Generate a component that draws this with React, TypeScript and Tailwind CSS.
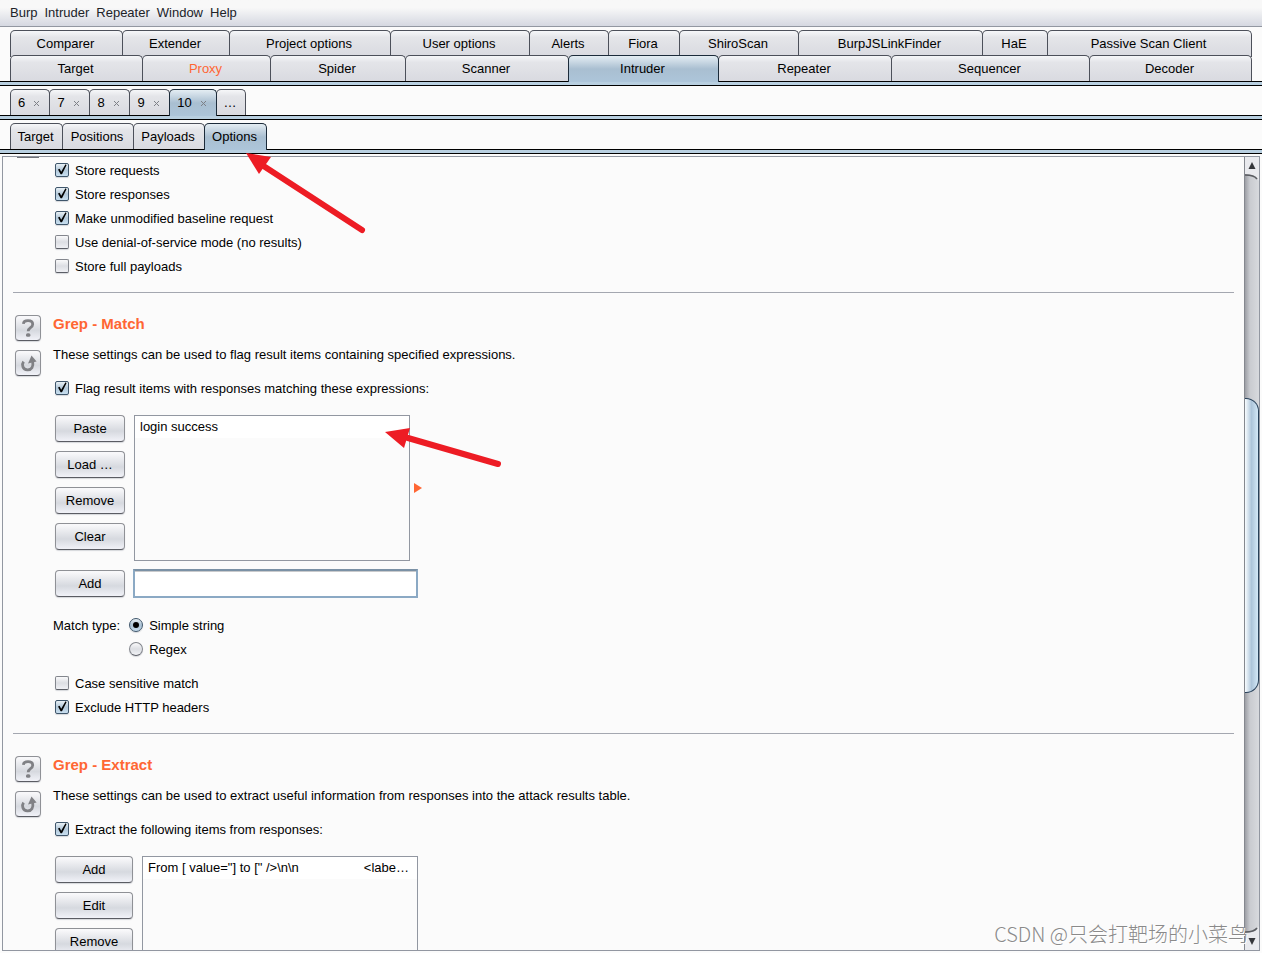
import React, { useId } from "react";

const fontStack = "font-['Liberation_Sans','Noto_Sans_CJK_SC',sans-serif]";

type TabItem = { label: string; size: string; active?: boolean; alert?: boolean };

const upperTabs: TabItem[] = [
  { label: "Comparer", size: "flex-[1_1_113px]" },
  { label: "Extender", size: "flex-[1_1_108px]" },
  { label: "Project options", size: "flex-[1_1_162px]" },
  { label: "User options", size: "flex-[1_1_140px]" },
  { label: "Alerts", size: "flex-[1_1_80px]" },
  { label: "Fiora", size: "flex-[1_1_72px]" },
  { label: "ShiroScan", size: "flex-[1_1_120px]" },
  { label: "BurpJSLinkFinder", size: "flex-[1_1_185px]" },
  { label: "HaE", size: "flex-[1_1_66px]" },
  { label: "Passive Scan Client", size: "flex-[1_1_205px]" },
];

const lowerTabs: TabItem[] = [
  { label: "Target", size: "flex-[1_1_133px]" },
  { label: "Proxy", size: "flex-[1_1_129px]", alert: true },
  { label: "Spider", size: "flex-[1_1_136px]" },
  { label: "Scanner", size: "flex-[1_1_164px]" },
  { label: "Intruder", size: "flex-[1_1_151px]", active: true },
  { label: "Repeater", size: "flex-[1_1_174px]" },
  { label: "Sequencer", size: "flex-[1_1_199px]" },
  { label: "Decoder", size: "flex-[1_1_163px]" },
];

const attackTabs: TabItem[] = [
  { label: "6", size: "w-10" },
  { label: "7", size: "w-[41px]" },
  { label: "8", size: "w-[41px]" },
  { label: "9", size: "w-[41px]" },
  { label: "10", size: "w-12", active: true },
];

const sectionTabs: TabItem[] = [
  { label: "Target", size: "w-[53px]" },
  { label: "Positions", size: "w-[72px]" },
  { label: "Payloads", size: "w-[72px]" },
  { label: "Options", size: "w-[63px]", active: true },
];

function Tab({ tab, children }: { tab: TabItem; children?: React.ReactNode }) {
  const look = tab.active
    ? "z-10 -mb-px border-[#1c2b3a] bg-linear-to-b from-[#e4edf3] via-[#a9bfd1] to-[#adc5da] pb-px"
    : "border-[#4c505a] bg-linear-to-b from-[#f6f7f9] from-0% via-[#e4e5e9] via-25% to-[#d9dae0]";
  return (
    <button
      type="button"
      role="tab"
      aria-selected={!!tab.active}
      className={`relative -ml-px flex min-w-0 items-center justify-center whitespace-nowrap rounded-t-[5px] border border-b-0 pr-[2px] first:ml-0 ${look} ${tab.size} ${tab.alert ? "text-[#ff6633]" : ""}`}
    >
      {children ?? tab.label}
    </button>
  );
}

function Band() {
  return <div className="h-[5px] shrink-0 border-y border-black bg-[#b8cfe0]" />;
}

function CloseMark() {
  return (
    <svg viewBox="0 0 7 7" className="mt-[2px] ml-2 size-[7px]" stroke="#7d8087" strokeWidth="1" aria-hidden="true">
      <path d="M1 1 6 6M6 1 1 6" />
    </svg>
  );
}

function CheckRow({ label, checked }: { label: string; checked?: boolean }) {
  const id = useId();
  return (
    <div className="flex h-6 items-center gap-[6px]">
      <span className="grid size-[14px] place-items-center">
        <input
          id={id}
          type="checkbox"
          defaultChecked={checked}
          className="peer col-start-1 row-start-1 size-[14px] appearance-none rounded-[2px] border border-[#83868d] border-b-[#5b5e66] bg-linear-to-b from-[#fafafb] via-[#dcdee3] to-[#eff0f4] shadow-[0_1px_1px_#d5d7db] checked:border-[#3f566b] checked:from-[#e9f1f6] checked:via-[#b3c8d9] checked:to-[#c8dff0]"
        />
        <svg
          viewBox="0 0 14 14"
          className="pointer-events-none invisible col-start-1 row-start-1 size-[14px] peer-checked:visible"
          aria-hidden="true"
        >
          <path d="M3 6.600 4.600 5.800 6.200 8.800 10.500 1.300 11.600 1.900 7 11.200 5.600 11.200Z" fill="#000" />
        </svg>
      </span>
      <label htmlFor={id} className="pt-[2px]">
        {label}
      </label>
    </div>
  );
}

function RadioRow({ label, checked }: { label: string; checked?: boolean }) {
  const id = useId();
  return (
    <div className="flex h-6 items-center gap-[6px]">
      <span className="grid size-[14px] place-items-center">
        <input
          id={id}
          type="radio"
          name="match-type"
          defaultChecked={checked}
          className="peer col-start-1 row-start-1 size-[14px] appearance-none rounded-full border border-[#83868d] border-b-[#5b5e66] bg-linear-to-b from-[#fafafb] via-[#dcdee3] to-[#f2f3f6] shadow-[0_1px_1px_#d5d7db] checked:border-[#3f566b] checked:from-[#e9f1f6] checked:via-[#a9c0d3] checked:to-[#c8dff0]"
        />
        <span className="pointer-events-none invisible col-start-1 row-start-1 size-[6px] rounded-full bg-black peer-checked:visible" />
      </span>
      <label htmlFor={id} className="pt-[2px]">
        {label}
      </label>
    </div>
  );
}

const buttonFace =
  "border border-[#8f9196] border-b-[#5a5c63] bg-linear-to-b from-[#f8f8fa] from-5% via-[#d6d9df] via-60% to-[#f1f2f8] shadow-[0_1px_1px_#d5d7db]";

function PushButton({ label }: { label: string }) {
  return (
    <button type="button" className={`h-[27px] w-full shrink-0 rounded-[4px] ${buttonFace}`}>
      {label}
    </button>
  );
}

function SideIcons() {
  return (
    <div className="flex w-[26px] shrink-0 flex-col gap-[9px] pt-[22px]">
      <button type="button" aria-label="Help" className={`grid size-[26px] place-items-center rounded-[4px] ${buttonFace}`}>
        <svg viewBox="0 0 24 24" className="size-6" aria-hidden="true">
          <path
            d="M7.400 7.800C7.600 5.300 9.400 4.700 12 4.700C15 4.700 16.700 6 16.700 8.200C16.700 10 15.700 10.800 14.500 11.600C13.200 12.500 12.300 13.200 12.200 15.200"
            fill="none"
            stroke="#808185"
            strokeWidth="2.800"
          />
          <rect x="10" y="17.200" width="4.400" height="3.600" rx="1.600" fill="#808185" />
        </svg>
      </button>
      <button type="button" aria-label="Restore defaults" className={`grid size-[26px] place-items-center rounded-[4px] ${buttonFace}`}>
        <svg viewBox="0 0 24 24" className="size-6" aria-hidden="true">
          <path d="M7.600 10.600C5.400 13.600 6.600 18.600 11.400 18.900C15.600 19.100 17.600 15.800 16.700 10.500" fill="none" stroke="#808185" strokeWidth="2.800" />
          <path d="M15.500 4.400 20.600 10.600 12 12.400Z" fill="#808185" />
        </svg>
      </button>
    </div>
  );
}

function ListBox({ item, tall }: { item: string; tall: string }) {
  return (
    <ul className={`w-[276px] border border-[#9297a1] bg-[#fbfbfb] ${tall}`}>
      <li className="h-[22px] overflow-hidden whitespace-pre bg-white px-[5px] leading-[22px]">{item}</li>
    </ul>
  );
}

function Section({ title, intro, children }: { title: string; intro: string; children: React.ReactNode }) {
  return (
    <section className="flex gap-3 pl-[2px]">
      <SideIcons />
      <div className="flex min-w-0 flex-1 flex-col pt-[21px]">
        <h2 className="h-5 text-[15px] leading-5 font-bold text-[#ff6633]">{title}</h2>
        <p className="mt-[11px] h-5 leading-5">{intro}</p>
        <div className="mt-[11px] flex flex-col pl-[2px]">{children}</div>
      </div>
    </section>
  );
}

function Rule() {
  return <hr className="border-0 border-t border-[#a4a7b0]" />;
}

function ScrollBar() {
  return (
    <div className="flex w-[15px] shrink-0 flex-col border-l border-[#85888f] bg-linear-to-r from-[#9d9fa5] via-[#c9cbd0] via-35% to-[#d8dade]">
      <button type="button" aria-label="Scroll up" className="h-6 shrink-0">
        <svg viewBox="0 0 14 24" className="h-6 w-full" preserveAspectRatio="none" aria-hidden="true">
          <path d="M0 0H14V24C12 19 8 17 0 17Z" fill="#e9eaee" />
          <path d="M0 18C7 18 10 19 12 22" fill="none" stroke="#5a5c61" strokeWidth="1.500" />
          <path d="M3.500 12 7 5 10.500 12Z" fill="#35373b" />
        </svg>
      </button>
      <div className="flex-[217_1_0px]" />
      <div className="flex-[294_1_0px] rounded-r-[13px] border border-l-0 border-[#28415a] bg-linear-to-r from-[#f2f8fc] from-5% via-[#adc5da] via-50% to-[#d3e8f7]" />
      <div className="flex-[233_1_0px]" />
      <button type="button" aria-label="Scroll down" className="h-6 shrink-0">
        <svg viewBox="0 0 14 24" className="h-6 w-full" preserveAspectRatio="none" aria-hidden="true">
          <path d="M0 24H14V0C12 5 8 7 0 7Z" fill="#e9eaee" />
          <path d="M0 6C7 6 10 5 12 2" fill="none" stroke="#5a5c61" strokeWidth="1.500" />
          <path d="M3.500 12 7 19 10.500 12Z" fill="#35373b" />
        </svg>
      </button>
    </div>
  );
}

export default function App() {
  return (
    <div className={`relative flex h-screen flex-col overflow-hidden bg-[#fbfbfb] text-[13px] leading-4 text-black ${fontStack}`}>
      <nav className="flex h-[27px] shrink-0 items-center gap-[7px] border-b border-[#9297a1] bg-linear-to-b from-[#f8f8f8] via-[#f8f8f8] via-30% to-[#d5d8e1] pl-[10px] text-[#202328]">
        {["Burp", "Intruder", "Repeater", "Window", "Help"].map((name) => (
          <button key={name} type="button">
            {name}
          </button>
        ))}
      </nav>

      <div role="tablist" className="mt-[3px] shrink-0 px-[10px]">
        <div className="flex h-[27px]">
          {upperTabs.map((tab) => (
            <Tab key={tab.label} tab={tab} />
          ))}
        </div>
        <div className="-mt-[2px] flex h-[26px]">
          {lowerTabs.map((tab) => (
            <Tab key={tab.label} tab={tab} />
          ))}
        </div>
      </div>
      <Band />

      <div role="tablist" className="mt-[3px] flex h-[26px] shrink-0 px-[10px]">
        {attackTabs.map((tab) => (
          <Tab key={tab.label} tab={tab}>
            {tab.label}
            <CloseMark />
          </Tab>
        ))}
        <Tab tab={{ label: "…", size: "w-[30px]" }} />
      </div>
      <Band />

      <div role="tablist" className="mt-[3px] flex h-[26px] shrink-0 px-[10px]">
        {sectionTabs.map((tab) => (
          <Tab key={tab.label} tab={tab} />
        ))}
      </div>
      <Band />

      <main className="mx-[2px] my-[2px] flex min-h-0 flex-1 border border-[#9297a1]">
        <div className="min-w-0 flex-1 overflow-hidden pr-[10px] pl-[10px]">
          <div className="flex h-[135px]">
            <div className="ml-1 h-px w-[22px] bg-[#6f7278]" />
            <div className="ml-4 flex flex-col pt-px">
              <CheckRow label="Store requests" checked />
              <CheckRow label="Store responses" checked />
              <CheckRow label="Make unmodified baseline request" checked />
              <CheckRow label="Use denial-of-service mode (no results)" />
              <CheckRow label="Store full payloads" />
            </div>
          </div>

          <Rule />
          <Section title="Grep - Match" intro="These settings can be used to flag result items containing specified expressions.">
            <CheckRow label="Flag result items with responses matching these expressions:" checked />
            <div className="mt-[15px] flex gap-[9px]">
              <div className="flex w-[70px] flex-col gap-[9px]">
                <PushButton label="Paste" />
                <PushButton label="Load …" />
                <PushButton label="Remove" />
                <PushButton label="Clear" />
              </div>
              <div className="flex items-center gap-1">
                <ListBox item="login success" tall="h-[146px]" />
                <svg viewBox="0 0 8 10" className="h-[10px] w-2" aria-hidden="true">
                  <path d="M0 0 8 5 0 10Z" fill="#ff6633" />
                </svg>
              </div>
            </div>
            <div className="mt-2 flex items-center gap-2">
              <div className="w-[70px]">
                <PushButton label="Add" />
              </div>
              <input
                type="text"
                aria-label="Expression to add"
                className="h-[29px] w-[285px] border-2 border-[#8ba9c4] border-t-[#7b91a5] bg-white px-1 shadow-[inset_0_1px_0_#c9cacc] outline-none"
              />
            </div>
            <fieldset className="-ml-[2px] mt-[15px] flex gap-[9px]">
              <div className="flex h-6 items-center pt-[2px]">Match type:</div>
              <div>
                <RadioRow label="Simple string" checked />
                <RadioRow label="Regex" />
              </div>
            </fieldset>
            <div className="mt-[10px] mb-[14px]">
              <CheckRow label="Case sensitive match" />
              <CheckRow label="Exclude HTTP headers" checked />
            </div>
          </Section>

          <Rule />
          <Section
            title="Grep - Extract"
            intro="These settings can be used to extract useful information from responses into the attack results table."
          >
            <CheckRow label="Extract the following items from responses:" checked />
            <div className="mt-[15px] flex gap-[9px]">
              <div className="flex w-[78px] flex-col gap-[9px]">
                <PushButton label="Add" />
                <PushButton label="Edit" />
                <PushButton label="Remove" />
              </div>
              <ListBox item={'From [ value="] to [" />\\n\\n                  <labe…'} tall="h-[146px]" />
            </div>
          </Section>
        </div>
        <ScrollBar />
      </main>

      <svg viewBox="0 0 270 330" className="pointer-events-none absolute top-[150px] left-[240px] z-20 h-[330px] w-[270px]" aria-hidden="true">
        <g fill="#ed1c24" stroke="#ed1c24" strokeLinecap="round">
          <path d="M22 15 122 80" strokeWidth="6" fill="none" />
          <path d="M6 3 31 7 19 24Z" strokeWidth="0" />
          <path d="M168 288 258 314" strokeWidth="6" fill="none" />
          <path d="M145 282 170 278 164 298Z" strokeWidth="0" />
        </g>
      </svg>

      <div className="pointer-events-none absolute right-[14px] bottom-1 z-20 font-['Noto_Sans_CJK_SC',sans-serif] text-[20px] leading-[30px] font-light whitespace-nowrap text-[#8a8a8a] [text-shadow:1px_1px_0_#ffffff]">
        CSDN @只会打靶场的小菜鸟
      </div>
    </div>
  );
}
